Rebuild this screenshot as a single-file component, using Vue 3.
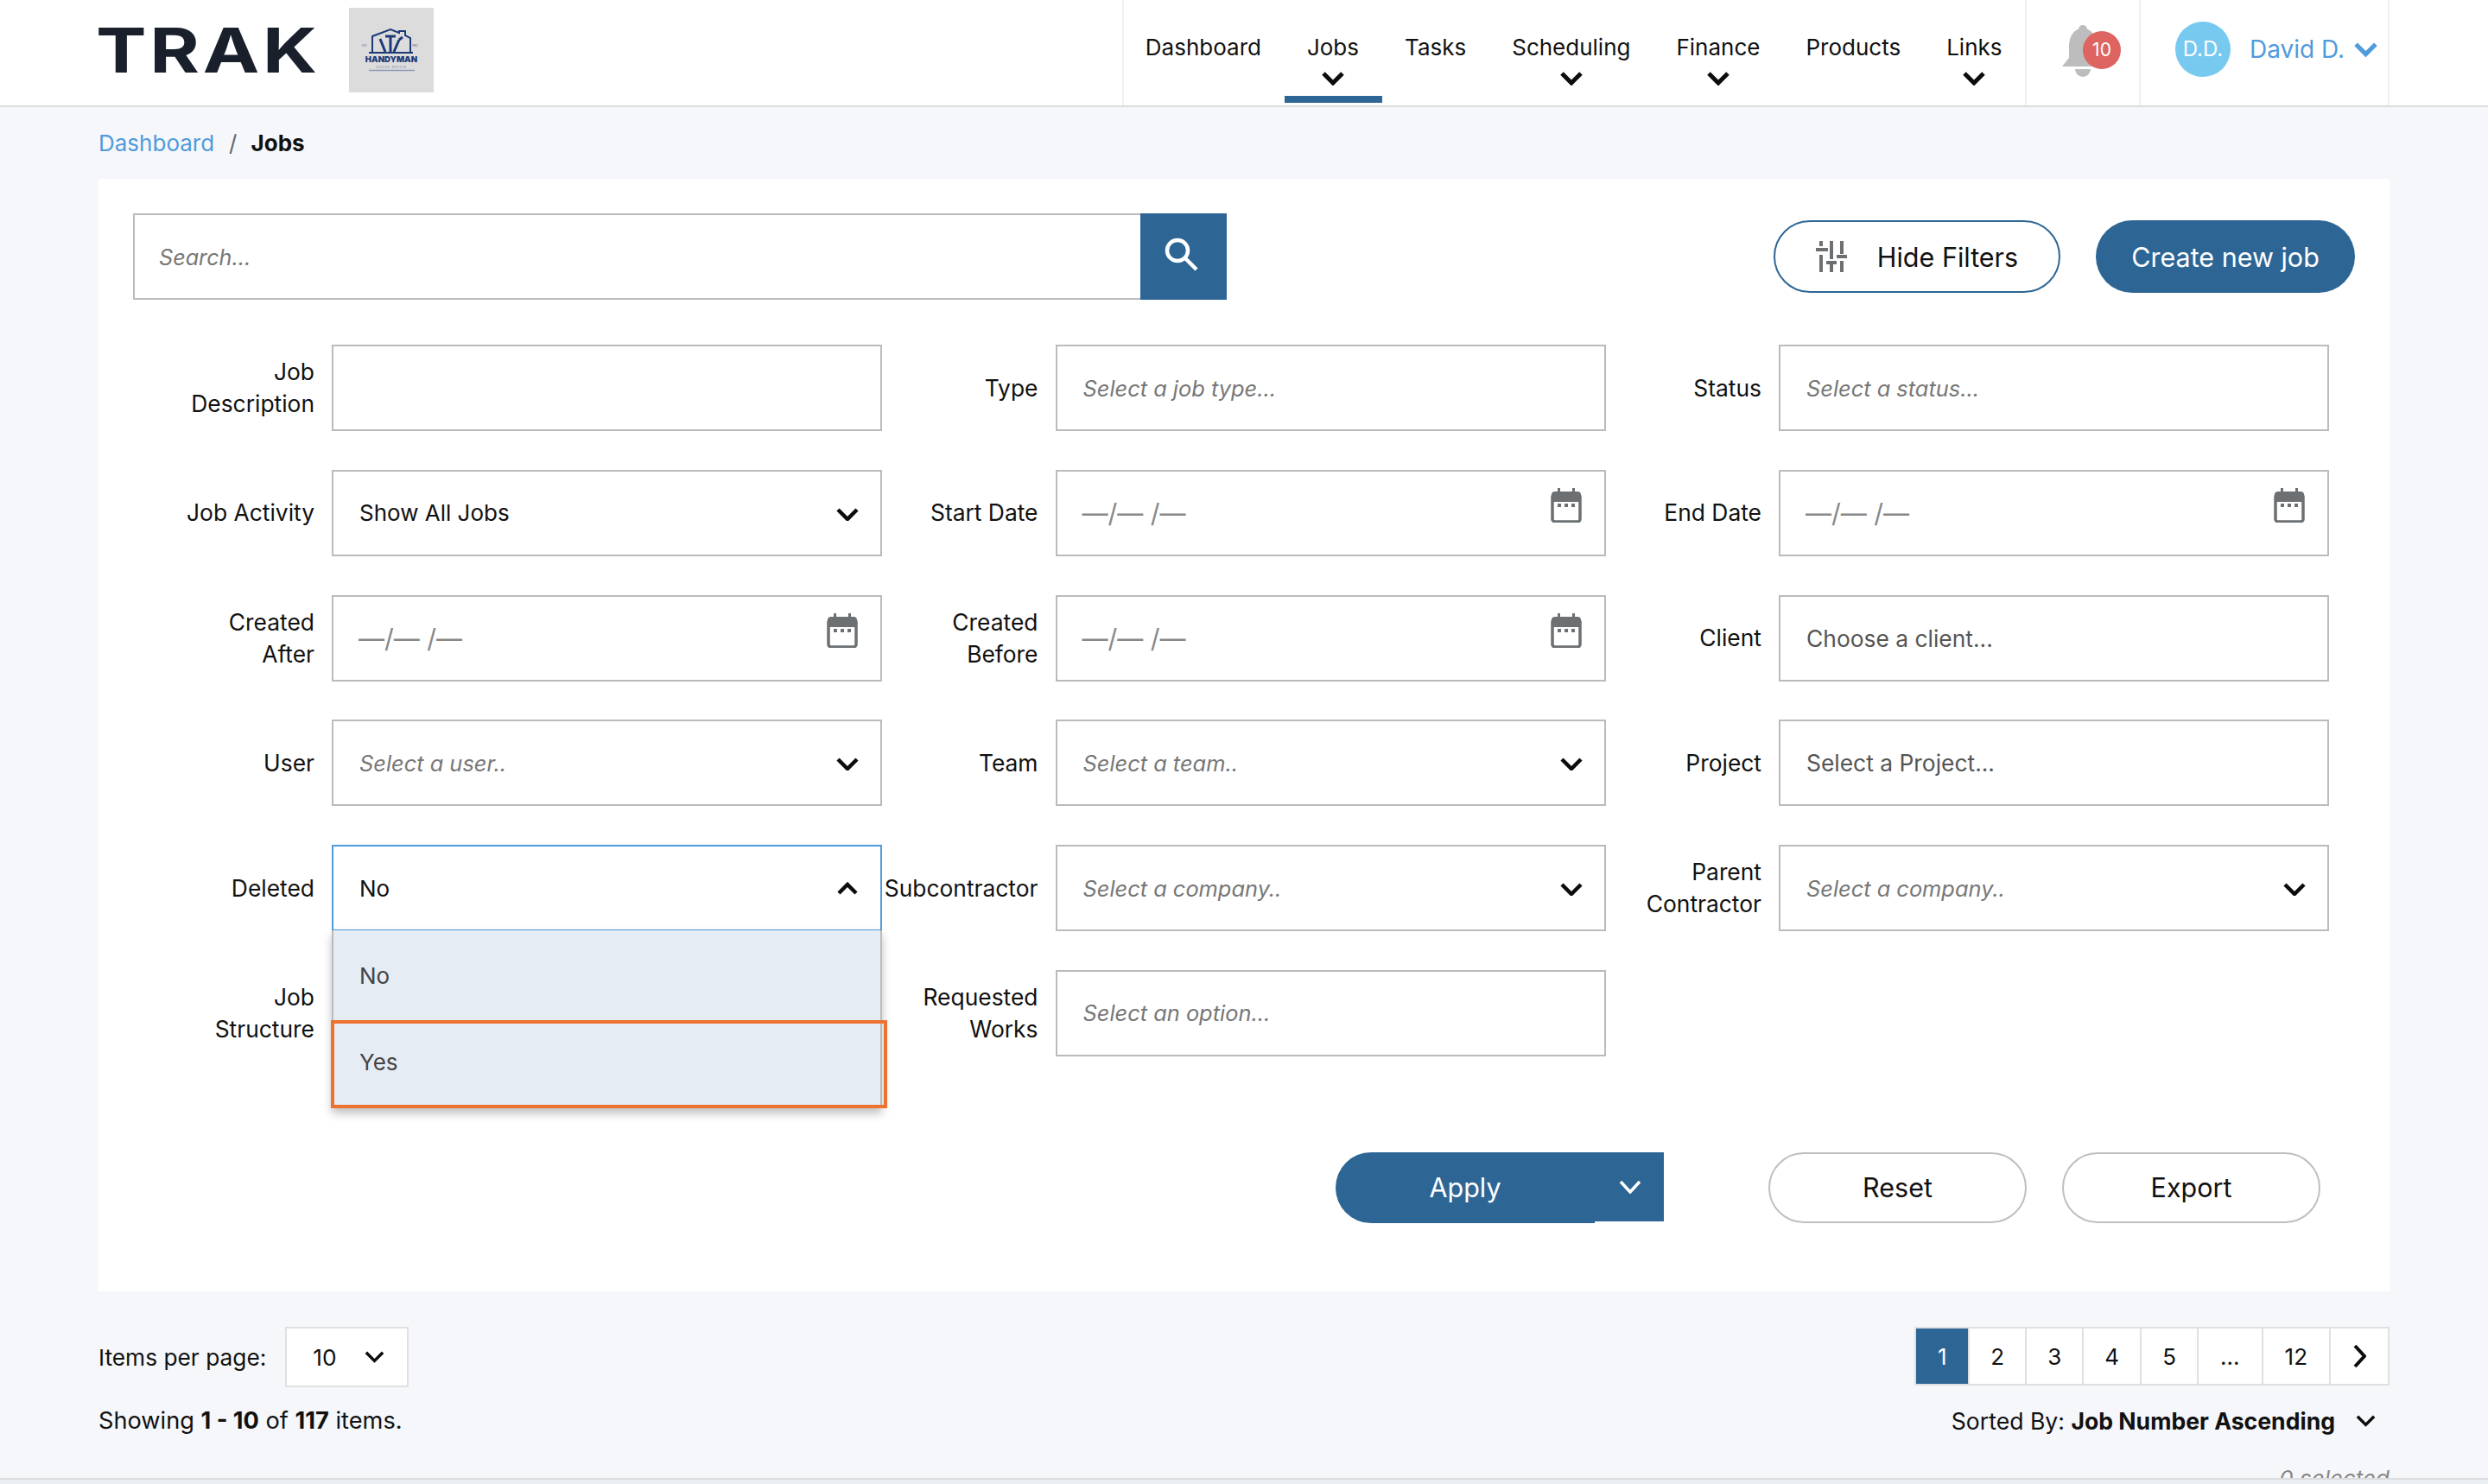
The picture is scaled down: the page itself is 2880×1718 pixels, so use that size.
<script setup>
const navItems = [
  { name: "Dashboard" },
  { name: "Jobs", menu: true, active: true },
  { name: "Tasks" },
  { name: "Scheduling", menu: true },
  { name: "Finance", menu: true },
  { name: "Products" },
  { name: "Links", menu: true },
];

const fields = [
  { label: "Job\nDescription", kind: "text" },
  { label: "Type", kind: "text", hint: "Select a job type..." },
  { label: "Status", kind: "text", hint: "Select a status..." },
  { label: "Job Activity", kind: "select", value: "Show All Jobs" },
  { label: "Start Date", kind: "date" },
  { label: "End Date", kind: "date" },
  { label: "Created\nAfter", kind: "date" },
  { label: "Created\nBefore", kind: "date" },
  { label: "Client", kind: "text", plain: "Choose a client..." },
  { label: "User", kind: "select", hint: "Select a user.." },
  { label: "Team", kind: "select", hint: "Select a team.." },
  { label: "Project", kind: "text", plain: "Select a Project..." },
  { label: "Deleted", kind: "select", value: "No", open: true },
  { label: "Subcontractor", kind: "select", hint: "Select a company.." },
  { label: "Parent\nContractor", kind: "select", hint: "Select a company.." },
  { label: "Job\nStructure", kind: "text" },
  { label: "Requested\nWorks", kind: "text", hint: "Select an option..." },
];

const pages = ["1", "2", "3", "4", "5", "...", "12"];
</script>

<template>
  <div class="page">
    <header class="topbar">
      <div class="logo"><span>TRAK</span></div>
      <div class="client-logo">
        <svg viewBox="0 0 98 98" width="98" height="98">
          <path class="house" d="M27 52V33l21-8 10 4v-2h7v5l6 3v17" />
          <path class="house" d="M23 52h51" />
          <path class="tool" d="M36 36l6 15M48 33v18M58 37l-6 14" />
          <path class="tool" d="M42 33h12M58 37l4-3" />
          <text x="15" y="45" class="tiny">EST.</text>
          <text x="73" y="45" class="tiny">1992</text>
          <text x="49" y="63" class="brand">HANDYMAN</text>
          <text x="49" y="69.5" class="sub">HOUSE REPAIR</text>
          <path d="M23 72.5h53" class="rule" />
        </svg>
      </div>

      <nav class="nav">
        <div
          v-for="item in navItems"
          :key="item.name"
          class="nav-item"
          :class="{ active: item.active }"
        >
          <span>{{ item.name }}</span>
          <svg v-if="item.menu" class="nav-chev" viewBox="0 0 26 16">
            <path d="M2 2l11 11L24 2" />
          </svg>
        </div>
      </nav>

      <div class="notify">
        <svg class="bell" viewBox="0 0 50 60" width="50" height="60">
          <circle cx="25" cy="5" r="5" />
          <path d="M25 4C13 4 9 15 9 26v12L1 48h48l-8-10V26C41 15 37 4 25 4z" />
          <path d="M16 51h18a9 9 0 0 1-18 0z" />
        </svg>
        <span class="badge">10</span>
      </div>

      <div class="user">
        <span class="avatar">D.D.</span>
        <span class="user-name">David D.</span>
        <svg class="user-chev" viewBox="0 0 26 16"><path d="M2 2l11 11L24 2" /></svg>
      </div>
    </header>

    <div class="crumbs">
      <a class="crumb-link">Dashboard</a>
      <span class="crumb-sep">/</span>
      <b>Jobs</b>
    </div>

    <main class="card">
      <div class="toolbar">
        <div class="search">
          <div class="search-box">Search...</div>
          <button class="search-btn">
            <svg viewBox="0 0 100 100" width="100" height="100">
              <circle cx="43" cy="43" r="12" />
              <path d="M52 52l13 13" />
            </svg>
          </button>
        </div>
        <div class="toolbar-actions">
          <button class="btn btn-outline">
            <svg class="sliders" viewBox="0 0 36 36" width="36" height="36">
              <path d="M6 0v6M0 10h14M6 16v20M18 0v21M12 25h12M18 27v9M30 0v15M24 18h12M30 23v13" />
            </svg>
            Hide Filters
          </button>
          <button class="btn btn-solid">Create new job</button>
        </div>
      </div>

      <div class="filters">
        <div v-for="field in fields" :key="field.label" class="field">
          <label class="field-label">{{ field.label }}</label>
          <div class="control" :class="{ focused: field.open }">
            <span v-if="field.hint" class="hint">{{ field.hint }}</span>
            <span v-else-if="field.plain" class="plain">{{ field.plain }}</span>
            <span v-else-if="field.value" class="value">{{ field.value }}</span>
            <span v-else-if="field.kind === 'date'" class="date-mask">—/— /—</span>

            <svg v-if="field.kind === 'select'" class="chev" viewBox="0 0 26 16">
              <path :d="field.open ? 'M3 13L13 3l10 10' : 'M2 3l11 11L24 3'" />
            </svg>
            <svg v-if="field.kind === 'date'" class="cal" viewBox="0 0 36 40" width="36" height="40">
              <path class="cal-frame" d="M2 10a3 3 0 0 1 3-3h26a3 3 0 0 1 3 3v26a3 3 0 0 1-3 3H5a3 3 0 0 1-3-3z" />
              <path class="cal-top" d="M1 8a4 4 0 0 1 4-4h26a4 4 0 0 1 4 4v8H1z" />
              <path class="cal-pins" d="M8 0h3v5H8zM25 0h3v5h-3zM8 18h4v4H8zM16 18h4v4h-4zM24 18h4v4h-4z" />
            </svg>

            <div v-if="field.open" class="menu">
              <div class="option">No</div>
              <div class="option option-marked">Yes</div>
            </div>
          </div>
        </div>
      </div>

      <div class="actions">
        <div class="apply">
          <button class="apply-main">Apply</button>
          <button class="apply-more">
            <svg viewBox="0 0 26 16" width="26" height="16"><path d="M2 2l11 12L24 2" /></svg>
          </button>
        </div>
        <div class="actions-right">
          <button class="btn btn-plain">Reset</button>
          <button class="btn btn-plain">Export</button>
        </div>
      </div>
    </main>

    <section class="footer">
      <div class="footer-left">
        <div class="per-page">
          <span>Items per page:</span>
          <div class="per-select">
            <span>10</span>
            <svg class="chev-small" viewBox="0 0 26 16"><path d="M2 2l11 11L24 2" /></svg>
          </div>
        </div>
        <p class="showing">Showing <b>1 - 10</b> of <b>117</b> items.</p>
      </div>
      <div class="footer-right">
        <div class="pager">
          <span
            v-for="(p, i) in pages"
            :key="p"
            class="pager-cell"
            :class="{ current: i === 0 }"
          >{{ p }}</span>
          <span class="pager-cell">
            <svg viewBox="0 0 16 28" width="16" height="28"><path d="M3 2l11 12L3 26" /></svg>
          </span>
        </div>
        <div class="sorted">
          <span>Sorted By: <b>Job Number Ascending</b></span>
          <svg class="chev-small" viewBox="0 0 26 16"><path d="M2 2l11 11L24 2" /></svg>
        </div>
        <p class="selected">0 selected</p>
      </div>
    </section>

    <div class="bottom-bar"></div>
  </div>
</template>

<style>
html,
body {
  margin: 0;
  background: #f5f7fb;
}
</style>

<style scoped>
* {
  box-sizing: border-box;
}

.page {
  position: relative;
  width: 2880px;
  height: 1718px;
  overflow: hidden;
  background: #f5f7fb;
  font-family: Inter, "Noto Sans", sans-serif;
  font-size: 26px;
  color: #111;
}

button {
  font-family: inherit;
  cursor: pointer;
}

/* top bar */
.topbar {
  display: flex;
  height: 124px;
  padding: 0 114px;
  background: #fff;
  border-bottom: 2px solid #dcdcdc;
}

.logo {
  align-self: center;
  width: 254px;
  margin: -6px 0 0 -3px;
  font-size: 72px;
  font-weight: 700;
  line-height: 72px;
  letter-spacing: 3px;
  color: #19202c;
  white-space: nowrap;
}

.logo span {
  display: inline-block;
  transform: scaleX(1.22);
  transform-origin: left center;
}

.client-logo {
  width: 98px;
  height: 98px;
  margin: 9px 0 0 39px;
  background: #dcdcdc;
}

.client-logo svg {
  display: block;
}

.house {
  fill: none;
  stroke: #1d3a78;
  stroke-width: 2;
}

.tool {
  fill: none;
  stroke: #1d3a78;
  stroke-width: 3;
}

.tiny {
  font-size: 3px;
  fill: #53648c;
}

.brand {
  font-size: 9.6px;
  font-weight: 900;
  fill: #1d3a78;
  text-anchor: middle;
}

.sub {
  font-size: 3.8px;
  letter-spacing: 0.7px;
  fill: #7d8aa8;
  text-anchor: middle;
}

.rule {
  stroke: #8c99b8;
  stroke-width: 1.6;
}

.nav {
  display: flex;
  margin-left: auto;
  border-left: 2px solid #f0f0f0;
}

.nav-item {
  position: relative;
  display: flex;
  flex-direction: column;
  align-items: center;
  padding: 39px 26.5px 0;
  line-height: 32px;
}

.nav-item:first-child {
  padding-left: 25px;
}

.nav-item.active::after {
  content: "";
  position: absolute;
  left: 1px;
  right: 0;
  bottom: 3px;
  height: 8px;
  background: #2d6695;
}

.nav-chev {
  width: 26px;
  height: 16px;
  margin-top: 12px;
  fill: none;
  stroke: #0c0c0c;
  stroke-width: 5;
}

.notify {
  position: relative;
  width: 134px;
  border-left: 2px solid #f0f0f0;
  border-right: 2px solid #f0f0f0;
}

.bell {
  display: block;
  margin: 29px 0 0 40px;
  fill: #bdbdbd;
}

.badge {
  position: absolute;
  left: 65px;
  top: 36px;
  width: 44px;
  height: 44px;
  border-radius: 50%;
  background: #dd6460;
  color: #fff;
  font-size: 21px;
  line-height: 44px;
  text-align: center;
}

.user {
  display: flex;
  align-items: center;
  width: 288px;
  padding: 0 0 8px 40px;
  border-right: 2px solid #f0f0f0;
}

.avatar {
  width: 64px;
  height: 64px;
  border-radius: 50%;
  background: #78c9ef;
  color: #fff;
  font-size: 24px;
  line-height: 64px;
  text-align: center;
}

.user-name {
  margin-left: 22px;
  font-size: 28px;
  color: #4f9bdc;
}

.user-chev {
  width: 27px;
  height: 17px;
  margin: 0 0 0 11px;
  fill: none;
  stroke: #4f9bdc;
  stroke-width: 5;
}

/* breadcrumb */
.crumbs {
  display: flex;
  align-items: center;
  height: 83px;
  padding: 0 114px;
}

.crumb-link {
  color: #4f9bdc;
}

.crumb-sep {
  margin: 0 16px 0 17px;
  color: #666;
}

/* card */
.card {
  width: 2652px;
  height: 1288px;
  margin-left: 114px;
  padding: 40px;
  background: #fff;
}

.toolbar {
  display: flex;
  justify-content: space-between;
  align-items: center;
  height: 100px;
}

.search {
  display: flex;
  width: 1266px;
  height: 100px;
}

.search-box {
  flex: 1;
  padding-left: 28px;
  border: 2px solid #bbb;
  border-right: 0;
  font-size: 25.2px;
  font-style: italic;
  line-height: 98px;
  color: #777;
}

.search-btn {
  width: 100px;
  height: 100px;
  padding: 0;
  border: 0;
  background: #2d6695;
}

.search-btn svg {
  display: block;
  fill: none;
  stroke: #fff;
  stroke-width: 4.5;
}

.toolbar-actions {
  display: flex;
  gap: 41px;
}

.btn {
  display: flex;
  align-items: center;
  justify-content: center;
  height: 84px;
  border-radius: 42px;
  font-size: 30.5px;
}

.btn-outline {
  width: 332px;
  gap: 35px;
  border: 2px solid #2d6695;
  background: #fff;
  color: #111;
}

.sliders {
  fill: none;
  stroke: #6c7072;
  stroke-width: 4;
}

.btn-solid {
  width: 300px;
  border: 0;
  background: #2d6695;
  color: #fff;
}

.btn-plain {
  width: 299px;
  height: 82px;
  border: 2px solid #bfbfbf;
  background: #fff;
  color: #111;
}

/* filter grid */
.filters {
  display: grid;
  grid-template-columns: repeat(3, 837.5px);
  grid-auto-rows: 100px;
  row-gap: 44.8px;
  margin: 52px 0 0 30px;
}

.field {
  display: flex;
  align-items: center;
  gap: 20px;
}

.field-label {
  flex: none;
  width: 180px;
  font-size: 26.4px;
  line-height: 37px;
  text-align: right;
  white-space: pre-line;
}

.control {
  position: relative;
  display: flex;
  align-items: center;
  width: 637px;
  height: 100px;
  padding-left: 30px;
  border: 2px solid #bbb;
  background: #fff;
}

.control.focused {
  border-color: #4f9bdc;
  z-index: 2;
}

.hint {
  font-size: 25.4px;
  font-style: italic;
  color: #777;
}

.plain {
  font-size: 26.4px;
  color: #555;
}

.value {
  color: #111;
}

.date-mask {
  margin-left: -1px;
  font-size: 30px;
  color: #888;
}

.chev {
  position: absolute;
  right: 25px;
  top: 41px;
  width: 26px;
  height: 16px;
  fill: none;
  stroke: #0c0c0c;
  stroke-width: 4.5;
}

.cal {
  position: absolute;
  right: 26px;
  top: 19px;
}

.cal-frame {
  fill: #fff;
  stroke: #6c7072;
  stroke-width: 3.5;
}

.cal-top {
  fill: #6c7072;
}

.cal-pins {
  fill: #6c7072;
}

.menu {
  position: absolute;
  left: -2px;
  right: -2px;
  top: 97px;
  border: solid #bbb;
  border-width: 0 2px;
  background: #e6ecf4;
  box-shadow: 0 6px 10px rgba(0, 0, 0, 0.25);
}

.option {
  height: 104px;
  padding-left: 30px;
  line-height: 106px;
  color: #444;
}

.option-marked {
  height: 102px;
  margin: 0 -8px 0 -3px;
  padding-left: 29px;
  border: 4px solid #ee7230;
  line-height: 90px;
}

/* action row */
.actions {
  display: flex;
  justify-content: space-between;
  height: 82px;
  margin: 111px 40px 0 1392px;
}

.apply {
  display: flex;
  align-items: flex-start;
}

.apply button {
  border: 0;
  background: #2d6695;
  color: #fff;
}

.apply-main {
  width: 300px;
  height: 82px;
  border-radius: 41px 0 0 41px;
  font-size: 30.5px;
}

.apply-more {
  width: 80px;
  height: 80px;
  padding: 0 0 0 1px;
}

.apply-more svg {
  display: block;
  margin: 0 auto;
  fill: none;
  stroke: #fff;
  stroke-width: 3.5;
}

.actions-right {
  display: flex;
  gap: 41px;
}

/* footer */
.footer {
  display: flex;
  justify-content: space-between;
  padding: 41px 114px 0;
}

.per-page {
  display: flex;
  align-items: center;
  gap: 22px;
  font-size: 26.3px;
}

.per-select {
  display: flex;
  align-items: center;
  justify-content: space-between;
  width: 143px;
  height: 70px;
  padding: 0 26px 0 30px;
  border: 2px solid #e0e0e0;
  background: #fff;
}

.chev-small {
  width: 23px;
  height: 14px;
  fill: none;
  stroke: #0c0c0c;
  stroke-width: 4;
}

.showing,
.selected {
  margin: 0;
  line-height: 34px;
}

.showing {
  margin-top: 22px;
  font-size: 27.2px;
}

.footer-right {
  display: flex;
  flex-direction: column;
  align-items: flex-end;
}

.pager {
  display: flex;
  height: 68px;
  border: 2px solid #e0e0e0;
  background: #fff;
}

.pager-cell {
  display: flex;
  align-items: center;
  justify-content: center;
  min-width: 66px;
  padding: 0 24px;
  border-left: 2px solid #e0e0e0;
}

.pager-cell:first-child {
  min-width: 60px;
  border-left: 0;
}

.pager-cell:nth-last-child(-n + 3) {
  padding: 0 25px;
}

.pager-cell.current {
  background: #2d6695;
  color: #fff;
}

.pager-cell svg {
  fill: none;
  stroke: #0c0c0c;
  stroke-width: 4;
}

.sorted {
  display: flex;
  align-items: center;
  gap: 24px;
  margin: 24px 16px 0 0;
  font-size: 26.6px;
  line-height: 34px;
}

.selected {
  margin-top: 33px;
  font-style: italic;
  color: #888;
}

.bottom-bar {
  position: absolute;
  left: 0;
  right: 0;
  bottom: 0;
  height: 7px;
  border-top: 2px solid #dcdcdc;
  background: #ebeef3;
}
</style>
